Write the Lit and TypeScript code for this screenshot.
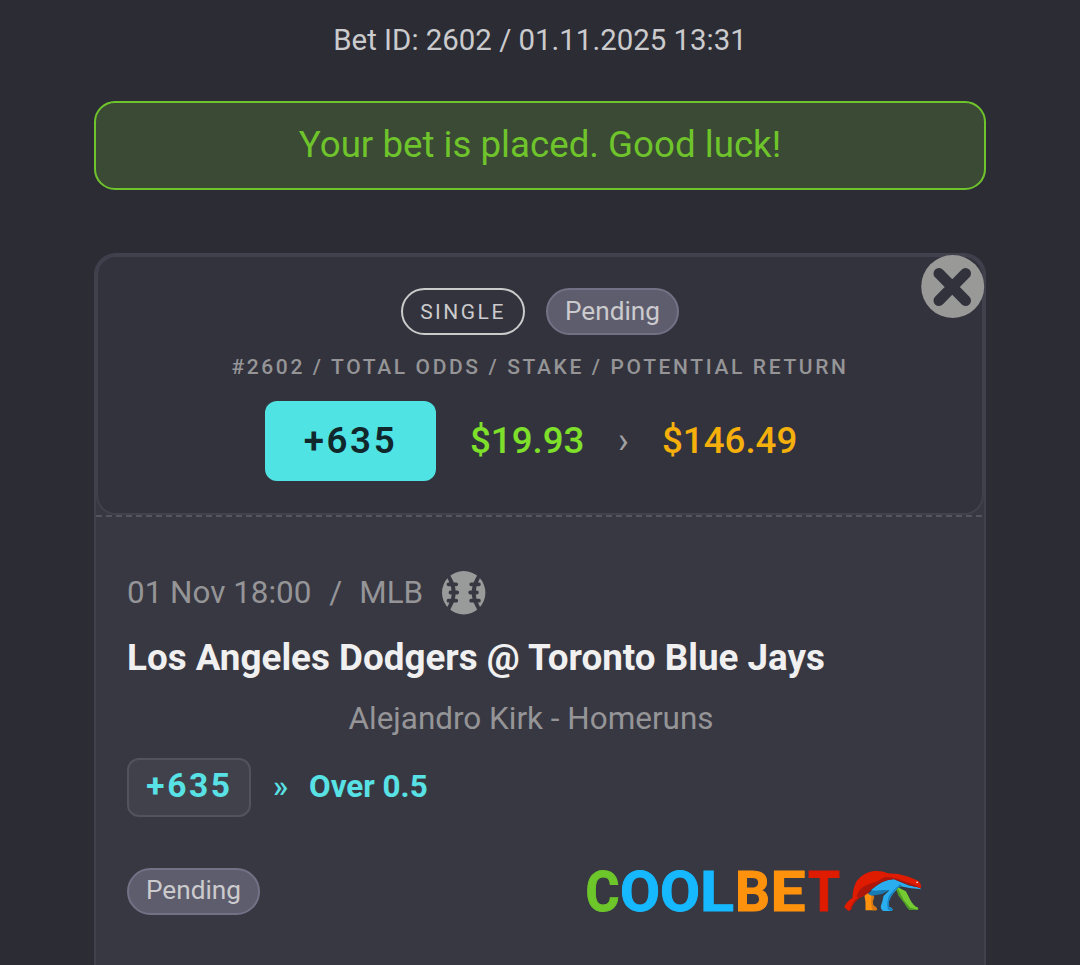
import { LitElement, html, css, svg } from 'lit';
import { customElement, property } from 'lit/decorators.js';

@customElement('bet-pill')
export class BetPill extends LitElement {

  static styles = css`
    :host {
        display: block;
    }
    .pill {
        display: flex;
        align-items: center;
        justify-content: center;
        box-sizing: border-box;
        height: 47px;
        width: 133px;
        border: 2px solid #747187;
        border-radius: 24px;
        background: #5e5d6d;
        color: #cbcbcd;
        font-size: 26.2px;
        padding-bottom: 1px;
    }
    .raised {
        padding-bottom: 3px;
    }
    .outline {
        width: 124px;
        border-color: #cbcbcb;
        background: none;
        font-size: 21px;
        letter-spacing: 2.5px;
        padding-bottom: 0;
    }
  `;

  @property()
  variant = 'filled';

  render() {
    return html`<div class="pill ${this.variant}"><slot></slot></div>`;
  }
}

@customElement('coolbet-logo')
export class CoolbetLogo extends LitElement {

  static styles = css`
    :host {
        display: block;
    }
    svg {
        display: block;
        overflow: visible;
    }
    .word {
        font: 700 56px Roboto, sans-serif;
        stroke-width: 1px;
    }
    .green { fill: #6dc62a; stroke: #6dc62a; }
    .blue { fill: #16b9ff; stroke: #16b9ff; }
    .orange { fill: #ff920c; stroke: #ff920c; }
    .red { fill: #df1b00; stroke: #df1b00; }
  `;

  letters = [
    { char: 'C', x: -0.5, width: 34, tone: 'green' },
    { char: 'O', x: 34, width: 40, tone: 'blue' },
    { char: 'O', x: 74, width: 40, tone: 'blue' },
    { char: 'L', x: 114, width: 34, tone: 'blue' },
    { char: 'B', x: 149, width: 35, tone: 'orange' },
    { char: 'E', x: 184.5, width: 35, tone: 'orange' },
    { char: 'T', x: 222, width: 32, tone: 'red' },
  ];

  render() {
    return html`
    <svg width="336" height="47" viewBox="0 0 336 47" xmlns="http://www.w3.org/2000/svg">
        ${this.letters.map(l => svg`<text class="word ${l.tone}" x="${l.x}" y="43" textLength="${l.width}" lengthAdjust="spacingAndGlyphs">${l.char}</text>`)}
        <g transform="translate(253.500 -8) scale(0.3333)">
            <path fill="#ff920c" d="M78 97 L95 104 L104 109 Q98 124 101 136 Q111 141 113 148 L110 151 H78 V126 L75 108 Z"/>
            <path fill="#d77714" d="M97 104 L104 109 Q98 124 101 136 Q111 141 113 148 L110 151 H99 Q92 126 97 104 Z"/>
            <path fill="#4e9c25" d="M167 81 L184 91 L195 120 L213 141 L233 147 L235 150 H210 Q203 145 194 129 L177 107 Z"/>
            <path fill="#75cb31" d="M172 80 L199 94 Q206 106 212 119 Q220 136 236 143 L236 149 L212 143 L193 121 Z"/>
            <path fill="#187bb5" d="M86 102 Q103 82 135 68 L154 76 L146 92 L128 102 L96 107 Z"/>
            <path fill="#2aaef0" d="M94 91 Q130 58 164 57 Q181 67 210 77 L239 82 L245 88 L210 84 L184 79 Q173 83 168 93 Q152 109 148 126 L149 141 Q159 143 160 150 L155 153 H132 Q123 149 124 138 Q130 123 132 108 L150 91 Q130 89 108 92 Z"/>
            <path fill="#1684c3" d="M181 73 L188 76 Q172 82 164 96 Q150 109 148 126 L149 141 L160 149 L155 153 L145 148 Q140 124 150 106 Q163 89 181 73 Z"/>
            <path fill="#df1b00" d="M14 143 Q18 127 39 113 Q39 88 51 64 Q70 37 103 33 Q128 31 145 40 Q177 40 207 50 L236 62 Q247 71 244 85 L218 77 Q189 63 164 56 Q129 57 94 88 Q83 103 59 113 Q39 129 35 149 L26 153 Q21 144 14 143 Z"/>
            <path fill="#ad170b" d="M32 149 Q37 125 58 111 Q48 112 54 101 Q64 80 88 73 Q116 65 136 51 Q166 51 190 62 L226 74 L245 84 Q218 80 193 69 Q174 61 163 58 Q130 59 96 87 Q83 106 59 115 Q40 131 35 149 L28 153 Z"/>
            <circle cx="233" cy="67" r="2.500" fill="#eee"/>
        </g>
    </svg>
    `;
  }
}

@customElement('app-root')
export class AppRoot extends LitElement {

  static styles = css`
    :host {
        display: block;
        box-sizing: border-box;
        height: 965px;
        overflow: hidden;
        padding: 0 94px;
        background: #2c2c35;
        font-family: Roboto, sans-serif;
        color: #a0a0a2;
    }
    .bet-id {
        height: 80px;
        line-height: 80px;
        margin-bottom: 21px;
        text-align: center;
        font-size: 29.4px;
        color: #cbcbcd;
    }
    .alert {
        box-sizing: border-box;
        height: 89px;
        line-height: 84px;
        margin-bottom: 63px;
        border: 2px solid #6fc42c;
        border-radius: 21px;
        background: #3a4a34;
        color: #6fc42c;
        text-align: center;
        font-size: 36.7px;
    }
    .card {
        position: relative;
        box-sizing: border-box;
        height: 760px;
        border: 2px solid #41404d;
        border-radius: 22px;
        background: #383843;
    }
    .close {
        position: absolute;
        top: 0;
        right: -1px;
    }
    .summary {
        display: flex;
        flex-direction: column;
        align-items: center;
        box-sizing: border-box;
        height: 260px;
        padding-top: 31px;
        border: 2px solid #41404d;
        border-radius: 20px;
        background: #33333d;
    }
    .pills {
        display: flex;
        gap: 21px;
    }
    .labels {
        height: 66px;
        line-height: 65px;
        white-space: nowrap;
        font-size: 21px;
        font-weight: 500;
        letter-spacing: 2.63px;
        color: #959597;
    }
    .amounts {
        display: flex;
        align-items: center;
        width: 550px;
        font-size: 36.7px;
        font-weight: 500;
        line-height: 79px;
        white-space: nowrap;
    }
    .total {
        box-sizing: border-box;
        width: 171px;
        height: 80px;
        margin-right: 34px;
        border-radius: 12px;
        background: #50e3e4;
        color: #10282c;
        text-align: center;
        letter-spacing: 2.6px;
        font-weight: 600;
    }
    .stake,
    .return {
        margin-top: -1px;
    }
    .stake {
        width: 148px;
        color: #7ee02a;
    }
    .arrow {
        width: 44px;
        font-size: 36px;
        font-weight: 400;
    }
    .return {
        color: #f5b00c;
    }
    .divider {
        display: block;
        height: 2px;
        background: repeating-linear-gradient(90deg, #56545f 0 6px, transparent 6px 10px);
    }
    .selection {
        padding: 54px 49px 0 31px;
    }
    .meta {
        display: flex;
        align-items: center;
        height: 44px;
        line-height: 44px;
        font-size: 31.4px;
        color: #959597;
        white-space: pre;
    }
    .meta span {
        height: 44px;
    }
    .slash {
        margin: 0 17px 0 18px;
    }
    .ball {
        margin-left: 19px;
    }
    .match {
        height: 44px;
        line-height: 44px;
        margin-top: 21px;
        font-size: 36.8px;
        font-weight: 700;
        color: #f0f0f0;
        white-space: nowrap;
    }
    .market {
        height: 40px;
        line-height: 40px;
        margin-top: 19px;
        text-align: center;
        font-size: 31.45px;
        color: #959597;
    }
    .pick {
        display: flex;
        height: 59px;
        line-height: 57px;
        margin-top: 19px;
        font-size: 31.4px;
        font-weight: 700;
        color: #58e2e5;
    }
    .odds {
        box-sizing: border-box;
        width: 124px;
        height: 59px;
        line-height: 51px;
        margin-right: 22px;
        border: 2px solid #53525d;
        border-radius: 12px;
        background: #41414b;
        text-align: center;
        font-size: 33.5px;
        letter-spacing: 2.6px;
        text-indent: 1px;
    }
    .quote {
        width: 36px;
        font-weight: 500;
    }
    .footer {
        display: flex;
        justify-content: space-between;
        margin-top: 51px;
        padding-right: 13px;
    }
  `;

  render() {
    return html`
    <div class="bet-id">Bet ID: 2602 / 01.11.2025 13:31</div>
    <div class="alert">Your bet is placed. Good luck!</div>
    <div class="card">
        <div class="summary">
            <div class="pills">
                <bet-pill variant="outline">SINGLE</bet-pill>
                <bet-pill>Pending</bet-pill>
            </div>
            <div class="labels">#2602 / TOTAL ODDS / STAKE / POTENTIAL RETURN</div>
            <div class="amounts">
                <span class="total">+635</span>
                <span class="stake">$19.93</span>
                <span class="arrow">›</span>
                <span class="return">$146.49</span>
            </div>
        </div>
        <div class="divider"></div>
        <div class="selection">
            <div class="meta">
                <span>01 Nov 18:00</span><span class="slash">/</span><span>MLB</span>
                ${this.renderBall()}
            </div>
            <div class="match">Los Angeles Dodgers @ Toronto Blue Jays</div>
            <div class="market">Alejandro Kirk - Homeruns</div>
            <div class="pick">
                <span class="odds">+635</span>
                <span class="quote">»</span>
                <span>Over 0.5</span>
            </div>
            <div class="footer">
                <bet-pill variant="raised">Pending</bet-pill>
                <coolbet-logo></coolbet-logo>
            </div>
        </div>
        <svg class="close" width="64" height="64" viewBox="0 0 64 64" xmlns="http://www.w3.org/2000/svg">
            <circle cx="31.7" cy="31.5" r="31.5" fill="#999998" />
            <path d="M18 18.500 L44.500 45.500 M44.500 18.500 L18 45.500" stroke="#32323d" stroke-width="11" stroke-linecap="round" />
        </svg>
    </div>
    `;
  }

  renderBall() {
    return html`
    <svg class="ball" width="44" height="44" viewBox="0 0 44 44" xmlns="http://www.w3.org/2000/svg">
        <circle cx="21.700" cy="21.700" r="21.700" fill="#999b9a" />
        <g fill="none" stroke="#383843" stroke-width="3.800" stroke-linecap="round">
            <path d="M5.500 3 L8 8 Q15.500 21.700 8 35 L5.500 40 M37.900 3 L35.400 8 Q27.900 21.700 35.400 35 L37.900 40" />
            <path d="M6.500 13.300 H14.200 M8.500 21.500 H15.200 M6.500 29.700 H14.200 M29.200 13.300 H36.900 M28.200 21.500 H34.900 M29.200 29.700 H36.900" />
        </g>
    </svg>
    `;
  }
}
